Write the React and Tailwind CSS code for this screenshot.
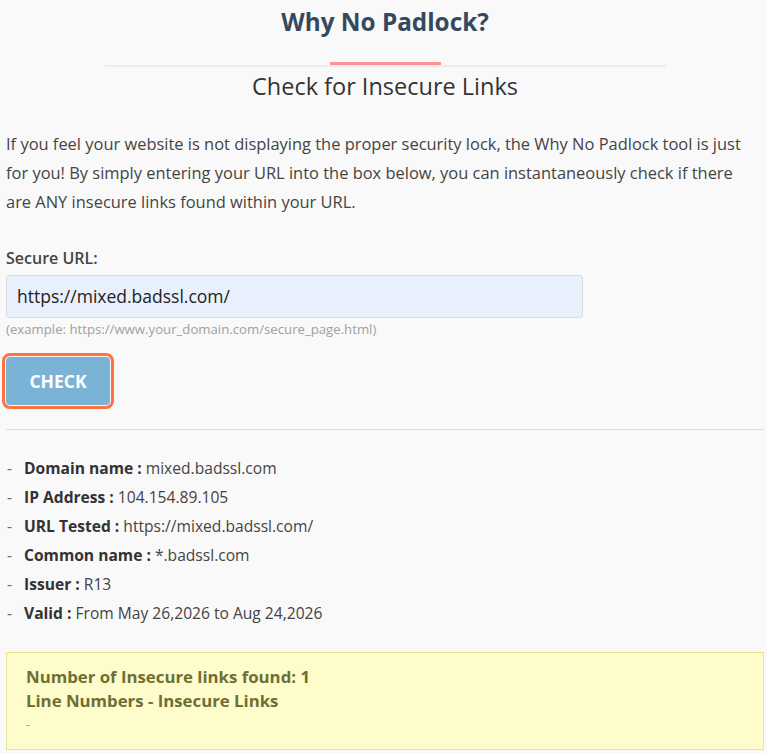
export default function App() {
  const details = [
    ["Domain name :", "mixed.badssl.com"],
    ["IP Address :", "104.154.89.105"],
    ["URL Tested :", "https://mixed.badssl.com/"],
    ["Common name :", "*.badssl.com"],
    ["Issuer :", "R13"],
    ["Valid :", "From May 26,2026 to Aug 24,2026"],
  ];

  return (
    <div className="min-h-[753px] bg-[#f9f9f9] text-[#444] font-['Open_Sans',sans-serif]">
      <div className="pl-[6px] pr-[3px] pt-[4px] pb-[3px]">
        <h1 className="text-center text-[24.3px] leading-[36px] font-bold text-[#34495e]">Why No Padlock?</h1>

        {/* section divider with accent bar */}
        <div className="mx-auto mt-[22px] w-[561px] flex flex-col items-center">
          <div className="w-[111px] h-[4px] bg-[#ff9191]" />
          <div className="w-full h-[2px] bg-[#ececec] -mt-[1px]" />
        </div>
        <h2 className="text-center text-[23.5px] leading-[30px] text-[#333] mt-[4px]">Check for Insecure Links</h2>

        <p className="mt-[28px] pr-[3px] text-[16.45px] leading-[29px] text-[#444]">
          If you feel your website is not displaying the proper security lock, the Why No Padlock tool is just for you! By simply entering your URL into the box below, you can instantaneously check if there are ANY insecure links found within your URL.
        </p>

        <label className="block mt-[32px] text-[16px] leading-[20px] font-semibold text-[#444]">Secure URL:</label>
        <div className="mt-[7px] w-[577px] h-[43px] bg-[#e8f0fe] border border-[#dcdcdc] rounded-[3px] flex items-center px-[10px] text-[17.5px] text-[#222]">
          https://mixed.badssl.com/
        </div>
        <div className="mt-[1px] text-[13.2px] leading-[20px] text-[#a0a0a0]">(example: https://www.your_domain.com/secure_page.html)</div>

        <div className="mt-[14px] -ml-[4px] w-[112px] h-[56px] rounded-[8px] border-[3px] border-[#ff7140] p-[1px]">
          <div className="w-full h-full rounded-[4px] bg-[#7ab3d5] flex items-center justify-center text-white font-bold text-[17.5px]">CHECK</div>
        </div>

        <div className="mt-[20px] h-px bg-[#dedede]" />

        <ul className="mt-[24px] flex flex-col">
          {details.map(([k, v]) => (
            <li key={k} className="flex text-[15.6px] leading-[29px] text-[#444]">
              <span className="w-[18px] pl-[1px] text-[#666]">-</span>
              <span><span className="font-bold text-[#333]">{k}</span> {v}</span>
            </li>
          ))}
        </ul>

        <div className="mt-[24px] bg-[#fefccb] border border-[#e6e490] px-[19px] pt-[12px] pb-[14px]">
          <div className="text-[16.8px] leading-[24px] font-bold text-[#6f6f34]">Number of Insecure links found: 1</div>
          <div className="text-[16.8px] leading-[24px] font-bold text-[#6f6f34]">Line Numbers - Insecure Links</div>
          <div className="text-[13px] leading-[22px] text-[#999]">-</div>
        </div>
      </div>
    </div>
  );
}
